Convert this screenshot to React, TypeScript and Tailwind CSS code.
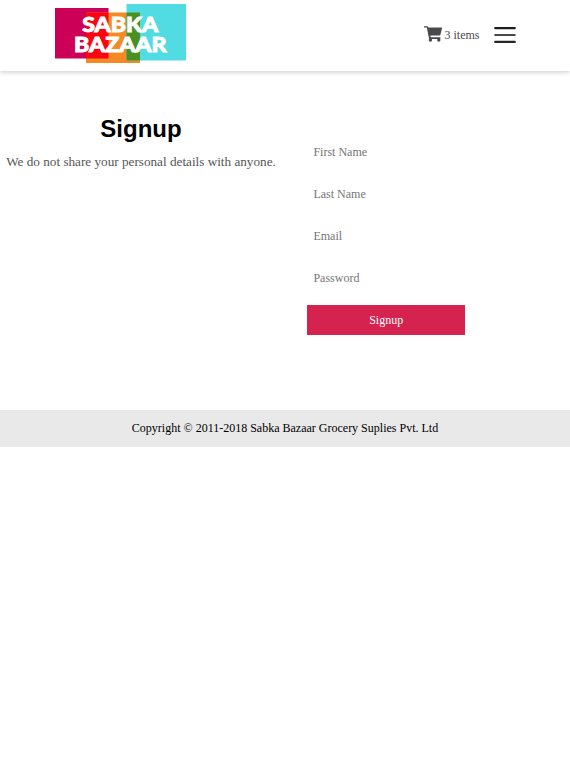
import React from "react";

const fields = [
  { label: "First Name", type: "text" },
  { label: "Last Name", type: "text" },
  { label: "Email", type: "email" },
  { label: "Password", type: "password" },
];

function Logo() {
  return (
    <svg width="132" height="60" viewBox="0 0 132 60" role="img" aria-label="Sabka Bazaar">
      <rect x="1" y="4" width="53.5" height="50.5" fill="#cd0057" />
      <rect x="32" y="8.5" width="54" height="50.5" fill="#f58a25" />
      <rect x="72.5" y="0" width="59.5" height="56.5" fill="#50dce2" />
      <rect x="32" y="8.5" width="22.5" height="46" fill="#fc0312" />
      <rect x="72.5" y="8.5" width="13.5" height="48" fill="#4a8f24" />
      <g className="font-['Lato'] font-black" fontSize="20.4" fill="#fff" stroke="#fff" strokeWidth="0.9">
        <text x="28.2" y="27.5" textLength="76" lengthAdjust="spacingAndGlyphs">SABKA</text>
        <text x="20" y="48" textLength="92.5" lengthAdjust="spacingAndGlyphs">BAZAAR</text>
      </g>
    </svg>
  );
}

function Cart() {
  return (
    <svg width="18" height="16" viewBox="0 0 18 16" fill="#4a4a4a">
      <path d="M0 .2h3.7l.6 1.3h13.2c.4 0 .6.3.5.7l-1.6 6.6c-.1.5-.4.7-.9.7H6.4l.3 1.7h9.2c.5 0 .7.4.6.8l-.2.9H5.1L2.8 1.6H0z" />
      <circle cx="6.4" cy="14.1" r="1.7" />
      <circle cx="14.8" cy="14.1" r="1.7" />
    </svg>
  );
}

function Menu() {
  return (
    <svg width="22" height="18" viewBox="0 0 22 18" strokeWidth="2.1" strokeLinecap="round">
      <path d="M1.2 2.1h19.6" stroke="#1c1c1c" />
      <path d="M1.2 9h19.6" stroke="#4a4a4a" />
      <path d="M1.2 15.9h19.6" stroke="#252525" />
    </svg>
  );
}

export default function App() {
  return (
    <div className="min-h-[761px] bg-white font-['Liberation_Serif',serif] text-xs">
      <header className="flex h-[71px] items-start justify-between pr-[54px] pl-[54px] shadow-[0_1px_5px_rgba(0,0,0,0.22)]">
        <div className="pt-1">
          <Logo />
        </div>
        <div className="flex items-center pt-[26px] text-[#4a4a4a]">
          <span className="-mt-0.5">
            <Cart />
          </span>
          <span className="ml-[2.5px] leading-4">3 items</span>
          <button className="ml-[14.5px]" aria-label="Menu">
            <Menu />
          </button>
        </div>
      </header>
      <main className="flex h-[339px]">
        <section className="w-[282px] pt-[43px] text-center">
          <h1 className="font-['Liberation_Sans',sans-serif] text-2xl leading-[30px] font-bold text-black">Signup</h1>
          <p className="mt-[9px] text-[13.2px] leading-[18px] whitespace-nowrap text-[#555]">
            We do not share your personal details with anyone.
          </p>
        </section>
        <form className="ml-[25.4px] flex w-[157.6px] flex-col gap-3 pt-[66px]">
          {fields.map((f) => (
            <input
              key={f.label}
              type={f.type}
              placeholder={f.label}
              className="h-[30px] w-full px-1.5 placeholder:text-[#757575]"
            />
          ))}
          <button type="button" className="h-[30px] w-full bg-[#d6224e] text-white">
            Signup
          </button>
        </form>
      </main>
      <footer className="flex h-[37px] items-center justify-center bg-[#e9e9e9] pb-0.5 text-black">
        Copyright © 2011-2018 Sabka Bazaar Grocery Suplies Pvt. Ltd
      </footer>
    </div>
  );
}
